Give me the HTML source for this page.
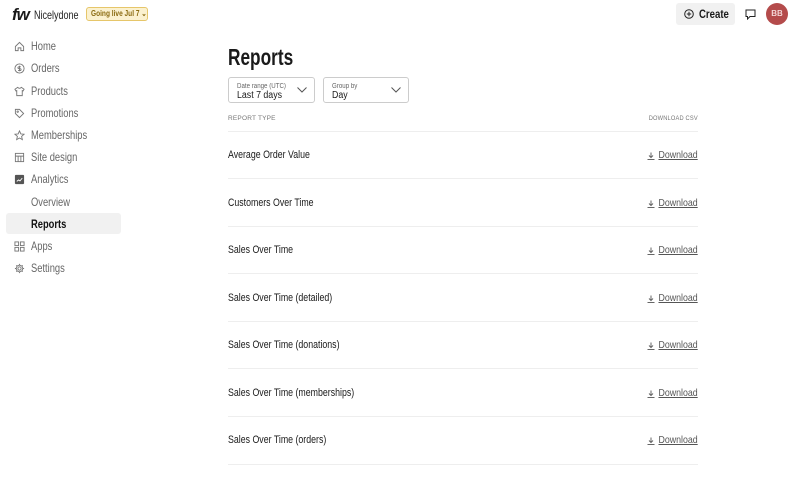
<!DOCTYPE html>
<html><head><meta charset="utf-8"><style>
*{box-sizing:border-box;margin:0;padding:0}
body{width:800px;height:494px;background:#fff;font-family:"Liberation Sans",sans-serif;color:#1a1a1a;position:relative;overflow:hidden}
.abs{position:absolute;white-space:nowrap}
.s{display:inline-block;transform-origin:left center}
.logo{left:12px;top:5px;font-size:17px;font-weight:bold;font-style:italic;letter-spacing:-1px}
.brand{left:34px;top:8px;font-size:12px;color:#222}
.brand .s{transform:scaleX(0.75)}
.badge{left:86px;top:7px;height:14px;width:62px;border:1px solid #e6c66a;background:#fbf1cf;border-radius:3px;font-size:8px;color:#8a6a10;line-height:12px;padding-left:4px;font-weight:bold}
.badge .s{transform:scaleX(0.82)}
.nav{left:14px;font-size:12px;color:#666;display:flex;align-items:center}
.nav .s{transform:scaleX(0.78)}
.nav svg{width:11px;height:11px;margin-right:6px}
.sel{left:6px;top:213px;width:115px;height:21px;background:#f1f1f1;border-radius:3px}
.create{left:676px;top:3px;width:59px;height:22px;background:#f1f1f1;border-radius:3px;font-size:12px;font-weight:bold;line-height:22px;padding-left:23px}
.create .s{transform:scaleX(0.8)}
.av{left:766px;top:3px;width:22px;height:22px;border-radius:50%;background:#b44b4b;color:#f3d5d5;font-size:8px;font-weight:bold;text-align:center;line-height:22px}
h1{position:absolute;left:228px;top:44px;font-size:23px;font-weight:bold;white-space:nowrap}
h1 .s{transform:scaleX(0.75)}
.dd{top:77px;height:26px;border:1px solid #ccc;border-radius:3px;padding:5px 0 0 8px}
.dd .l{font-size:7px;color:#666;line-height:7px}
.dd .v{font-size:10px;line-height:11px}
.dd .s{transform:scaleX(0.88)}
.dd svg{position:absolute;right:7px;top:9px}
.hd{top:115px;font-size:6.5px;color:#777;letter-spacing:0.2px}
.line{left:228px;width:470px;height:1px;background:#eee}
.rt{left:228px;font-size:11px}
.rt .s{transform:scaleX(0.8)}
.dl{right:102px;width:60px;font-size:10.5px;color:#555;display:flex;align-items:center;justify-content:flex-end}
.dl .t{text-decoration:underline;display:inline-block;transform:scaleX(0.84);transform-origin:right center}
.dl svg{position:absolute;left:9px;top:3px}
</style></head><body>
<div class="abs logo">fw</div>
<div class="abs brand"><span class="s">Nicelydone</span></div>
<div class="abs badge"><span class="s">Going live Jul 7 ⌄</span></div>
<div class="abs sel"></div>
<div class="abs nav" style="top:39px"><svg viewBox="0 0 12 12" fill="none" stroke="#777"><path d="M1.5 6L6 1.5 10.5 6V10.5H7.5V7.5H4.5V10.5H1.5Z"/></svg><span class="s">Home</span></div>
<div class="abs nav" style="top:61px"><svg viewBox="0 0 12 12" fill="none" stroke="#777"><circle cx="6" cy="6" r="5"/><path d="M7.5 4.2H5.3a1 1 0 000 2h1.4a1 1 0 010 2H4.5M6 3v6"/></svg><span class="s">Orders</span></div>
<div class="abs nav" style="top:84px"><svg viewBox="0 0 12 12" fill="none" stroke="#777"><path d="M4 1.5L1 3.5 2.2 5.5 3 5V10.5H9V5L9.8 5.5 11 3.5 8 1.5Q6 3.5 4 1.5Z"/></svg><span class="s">Products</span></div>
<div class="abs nav" style="top:106px"><svg viewBox="0 0 12 12" fill="none" stroke="#777"><path d="M1.5 1.5H6L10.5 6 6 10.5 1.5 6Z"/><circle cx="4" cy="4" r=".8"/></svg><span class="s">Promotions</span></div>
<div class="abs nav" style="top:128px"><svg viewBox="0 0 12 12" fill="none" stroke="#777"><path d="M6 1L7.5 4.3 11 4.6 8.3 7 9.1 10.5 6 8.7 2.9 10.5 3.7 7 1 4.6 4.5 4.3Z"/></svg><span class="s">Memberships</span></div>
<div class="abs nav" style="top:150px"><svg viewBox="0 0 12 12" fill="none" stroke="#777"><rect x="1.5" y="1.5" width="9" height="9"/><path d="M1.5 4.5H10.5M4.5 4.5V10.5M7.5 4.5V10.5"/></svg><span class="s">Site design</span></div>
<div class="abs nav" style="top:172px"><svg viewBox="0 0 12 12"><rect x="1" y="1" width="10" height="10" rx="1" fill="#555"/><path d="M3 8L5 6.5 6.5 7.5 9 4.5" stroke="#fff" fill="none"/></svg><span class="s">Analytics</span></div>
<div class="abs nav" style="top:195px;left:31px"><span class="s">Overview</span></div>
<div class="abs nav" style="top:217px;left:31px;color:#111;font-weight:bold"><span class="s">Reports</span></div>
<div class="abs nav" style="top:239px"><svg viewBox="0 0 12 12" fill="none" stroke="#777"><rect x="1" y="1" width="4" height="4"/><rect x="7" y="1" width="4" height="4"/><rect x="1" y="7" width="4" height="4"/><rect x="7" y="7" width="4" height="4"/></svg><span class="s">Apps</span></div>
<div class="abs nav" style="top:261px"><svg viewBox="0 0 12 12" fill="none" stroke="#777"><circle cx="6" cy="6" r="1.8"/><path d="M6 1V2.5M6 9.5V11M1 6H2.5M9.5 6H11M2.5 2.5L3.5 3.5M8.5 8.5L9.5 9.5M2.5 9.5L3.5 8.5M8.5 3.5L9.5 2.5"/><circle cx="6" cy="6" r="3.6"/></svg><span class="s">Settings</span></div>

<div class="abs create"><svg class="abs" style="left:8px;top:6px" width="10" height="10" viewBox="0 0 10 10" fill="none" stroke="#222"><circle cx="5" cy="5" r="4.3"/><path d="M5 2.8V7.2M2.8 5H7.2"/></svg><span class="s">Create</span></div>
<svg class="abs" style="left:745px;top:9px" width="11" height="11" viewBox="0 0 11 11" fill="none" stroke="#222"><path d="M1 1H10V7.5H5L2.5 10V7.5H1Z"/></svg>
<div class="abs av">BB</div>

<h1><span class="s">Reports</span></h1>
<div class="abs dd" style="left:228px;width:87px"><div class="l"><span class="s">Date range (UTC)</span></div><div class="v"><span class="s">Last 7 days</span></div><svg width="10" height="6" viewBox="0 0 10 6" fill="none" stroke="#555"><path d="M.5.5L5 5 9.5.5"/></svg></div>
<div class="abs dd" style="left:323px;width:86px"><div class="l"><span class="s">Group by</span></div><div class="v"><span class="s">Day</span></div><svg width="10" height="6" viewBox="0 0 10 6" fill="none" stroke="#555"><path d="M.5.5L5 5 9.5.5"/></svg></div>
<div class="abs hd" style="left:228px">REPORT TYPE</div>
<div class="abs hd" style="right:102px;transform:scaleX(0.88);transform-origin:right center">DOWNLOAD CSV</div>
<div class="abs line" style="top:131px"></div>

<div class="abs rt" style="top:149px"><span class="s">Average Order Value</span></div>
<div class="abs rt" style="top:197px"><span class="s">Customers Over Time</span></div>
<div class="abs rt" style="top:244px"><span class="s">Sales Over Time</span></div>
<div class="abs rt" style="top:292px"><span class="s">Sales Over Time (detailed)</span></div>
<div class="abs rt" style="top:339px"><span class="s">Sales Over Time (donations)</span></div>
<div class="abs rt" style="top:387px"><span class="s">Sales Over Time (memberships)</span></div>
<div class="abs rt" style="top:434px"><span class="s">Sales Over Time (orders)</span></div>

<div class="abs line" style="top:178px"></div>
<div class="abs line" style="top:226px"></div>
<div class="abs line" style="top:273px"></div>
<div class="abs line" style="top:321px"></div>
<div class="abs line" style="top:368px"></div>
<div class="abs line" style="top:416px"></div>
<div class="abs line" style="top:464px"></div>

<div class="abs dl" style="top:149px"><svg width="8" height="8" viewBox="0 0 8 8" fill="none" stroke="#666"><path d="M4 .5V5.5M2 3.5L4 5.5 6 3.5M.5 7.5H7.5"/></svg><span class="t">Download</span></div>
<div class="abs dl" style="top:197px"><svg width="8" height="8" viewBox="0 0 8 8" fill="none" stroke="#666"><path d="M4 .5V5.5M2 3.5L4 5.5 6 3.5M.5 7.5H7.5"/></svg><span class="t">Download</span></div>
<div class="abs dl" style="top:244px"><svg width="8" height="8" viewBox="0 0 8 8" fill="none" stroke="#666"><path d="M4 .5V5.5M2 3.5L4 5.5 6 3.5M.5 7.5H7.5"/></svg><span class="t">Download</span></div>
<div class="abs dl" style="top:292px"><svg width="8" height="8" viewBox="0 0 8 8" fill="none" stroke="#666"><path d="M4 .5V5.5M2 3.5L4 5.5 6 3.5M.5 7.5H7.5"/></svg><span class="t">Download</span></div>
<div class="abs dl" style="top:339px"><svg width="8" height="8" viewBox="0 0 8 8" fill="none" stroke="#666"><path d="M4 .5V5.5M2 3.5L4 5.5 6 3.5M.5 7.5H7.5"/></svg><span class="t">Download</span></div>
<div class="abs dl" style="top:387px"><svg width="8" height="8" viewBox="0 0 8 8" fill="none" stroke="#666"><path d="M4 .5V5.5M2 3.5L4 5.5 6 3.5M.5 7.5H7.5"/></svg><span class="t">Download</span></div>
<div class="abs dl" style="top:434px"><svg width="8" height="8" viewBox="0 0 8 8" fill="none" stroke="#666"><path d="M4 .5V5.5M2 3.5L4 5.5 6 3.5M.5 7.5H7.5"/></svg><span class="t">Download</span></div>
</body></html>
